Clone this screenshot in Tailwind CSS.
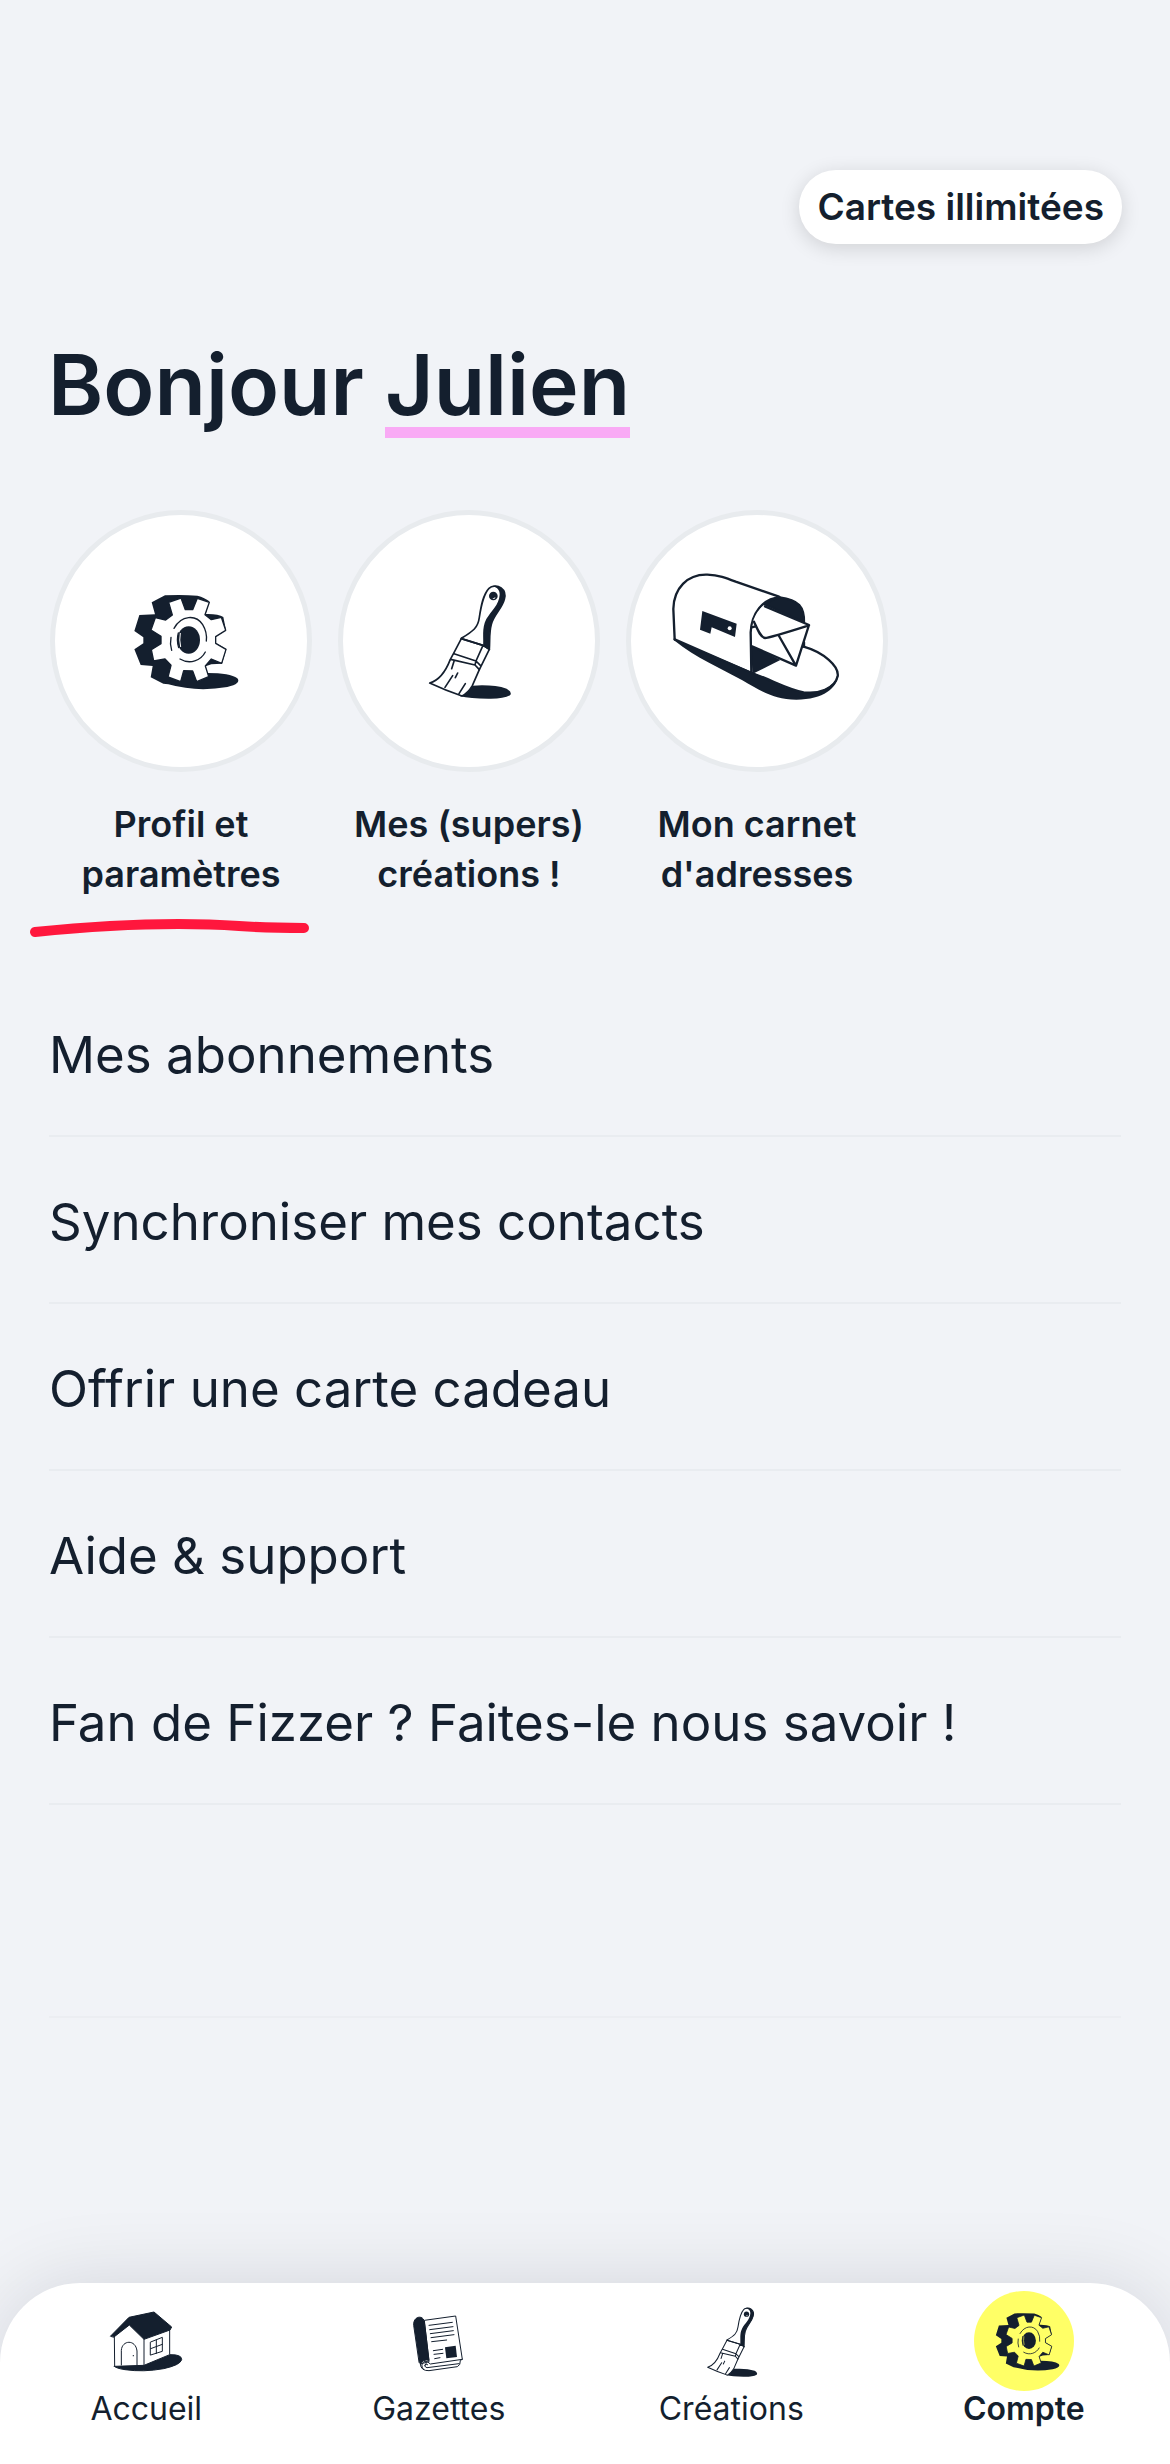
<!DOCTYPE html>
<html lang="fr">
<head>
<meta charset="utf-8">
<meta name="viewport" content="width=device-width, initial-scale=1">
<title>Compte</title>
<script src="https://cdn.jsdelivr.net/npm/@tailwindcss/browser@4"></script>
</head>
<body class="flex min-h-screen flex-col overflow-x-hidden bg-[#f1f3f7] font-['Inter',sans-serif] text-[#141f2e]">

<!-- Shared drawings: currentColor is the paper colour behind the ink -->
<svg class="hidden" aria-hidden="true">
  <symbol id="gear" overflow="visible">
    <path fill="#141f2e" d="M125 100L165 79Q215 76 262 80Q285 86 298 97L287 135Q325 134 340 144L348 183L318 203V222L349 240L336 284L304 286L287 292L292 312Q360 312 382 328Q395 344 352 354Q260 370 175 346L160 344L122 325L128 291L92 288L73 241L100 223V205L73 186L88 138L135 136Z"/>
    <path fill="currentColor" stroke="#141f2e" stroke-width="4" stroke-linejoin="round" d="M176 100L213 87L226 122H248L262 88L298 100L285 137L304 152L334 145L347 184L317 203V223L348 241L335 283L304 270L286 291L296 323L260 338L248 306L221 305L212 338L174 324L183 289L165 270L131 276L124 242L153 224V202L123 183L136 146L167 153L187 138Z"/>
    <ellipse cx="236" cy="213" rx="34" ry="41" fill="#141f2e"/>
    <g fill="none" stroke="#141f2e" stroke-width="4" stroke-linecap="round">
      <path d="M192 178C214 138 258 136 278 167Q292 190 289 216M210 270C240 288 273 274 286 249M183 205Q179 225 185 244M205 192Q199 213 206 236"/>
    </g>
    <path d="M211 192Q207 213 212 234" fill="none" stroke="currentColor" stroke-width="3"/>
  </symbol>
  <symbol id="brush" overflow="visible">
    <path fill="#141f2e" d="M150 382L188 350Q250 346 290 359Q308 370 300 379Q280 390 235 389Q180 389 150 382Z"/>
    <g stroke="#141f2e" stroke-width="5" stroke-linejoin="round" stroke-linecap="round">
      <path fill="#141f2e" d="M241 57C262 42 292 61 283 91C276 119 251 137 244 166C237 192 240 213 238 241L219 234L219 170L255 60Z"/>
      <path fill="currentColor" stroke="none" d="M154 208C190 186 204 176 208 145C213 112 219 77 237 57C250 46 270 58 269 77C267 108 243 126 229 150C214 179 222 206 219 234Z"/>
      <path fill="none" d="M154 208C190 186 204 176 208 145C213 112 219 77 237 58C247 49 262 50 269 60"/>
      <path fill="currentColor" d="M154 209L219 229L238 241L208 302L187 350Q174 372 156 381Q104 363 59 342Q98 331 121 271L132 251Z"/>
      <path fill="none" d="M154 209L219 229L198 276L132 254M122 271L195 288L208 302M198 276L195 288M198 276L211 289M219 229L238 241M133 274L125 299M128 320L105 355M143 312L136 326M166 344L147 374"/>
    </g>
    <circle cx="250" cy="81" r="13" fill="#141f2e"/>
    <path d="M247 89L253 90L257 84Z" fill="currentColor"/>
  </symbol>
</svg>

<main class="flex flex-1 flex-col px-12 pt-[170px]">
  <button type="button" class="self-end rounded-full bg-white px-[18px] py-3 text-[37px] leading-[50px] font-semibold shadow-[0_4px_20px_rgba(0,0,0,0.14)]">Cartes illimitées</button>

  <h1 class="mt-[87px] text-[84px] leading-[108px] font-semibold">Bonjour <span class="inline-block border-b-[11px] border-[#f9aaf5] leading-none">Julien</span></h1>

  <nav aria-label="Raccourcis" class="mt-[71px] ml-0.5 flex gap-[26px]">
    <a href="#profil" class="flex w-[262px] flex-col items-center text-center text-[36px] leading-[50px] font-semibold">
      <span class="flex size-[262px] rounded-full border-[5px] border-[#e8ebee] bg-white text-white">
        <svg class="size-full" viewBox="-165 -162 756 756" aria-hidden="true"><use href="#gear"/></svg>
      </span>
      <span class="mt-[27px]">Profil et<br>paramètres</span>
    </a>
    <a href="#creations" class="flex w-[262px] flex-col items-center text-center text-[36px] leading-[50px] font-semibold">
      <span class="flex size-[262px] rounded-full border-[5px] border-[#e8ebee] bg-white text-white">
        <svg class="size-full" viewBox="-201 -162 756 756" aria-hidden="true"><use href="#brush"/></svg>
      </span>
      <span class="mt-[27px]">Mes (supers)<br>créations !</span>
    </a>
    <a href="#carnet" class="flex w-[262px] flex-col items-center text-center text-[36px] leading-[50px] font-semibold">
      <span class="flex size-[262px] rounded-full border-[5px] border-[#e8ebee] bg-white">
        <svg class="size-full" viewBox="-84 -132 756 756" fill="none" stroke="#141f2e" stroke-width="7" stroke-linejoin="round" stroke-linecap="round" aria-hidden="true">
          <path fill="#141f2e" stroke="none" d="M45 240L278 338C335 364 390 398 448 401C492 402 530 376 538 348C535 386 494 422 412 422C340 422 300 392 250 364L150 311C112 292 80 271 45 244Z"/>
          <path d="M47 241L43 150C44 88 85 45 145 47C180 48 200 56 230 68L360 113"/>
          <path d="M434 263C494 280 541 322 536 352C527 390 478 406 434 400C384 391 335 361 278 342L47 241"/>
          <path fill="#141f2e" d="M318 137Q337 119 362 115C420 122 436 145 435 190Z"/>
          <path fill="#141f2e" stroke="none" d="M277 259L364 303L280 345Z"/>
          <path d="M277 340L275 220C278 165 310 118 362 115"/>
          <path fill="#fff" stroke="none" d="M282 186Q295 152 316 139L450 198L411 320L279 262Z"/>
          <path d="M318 142L450 198L411 320L279 262M285 188C296 212 304 235 318 237Q330 237 450 199M360 231L409 317M435 250V263M278 205L287 203"/>
          <path fill="#141f2e" stroke="none" d="M130 156L233 194L228 234L158 205L154 224L123 212Z"/>
          <circle cx="212" cy="208" r="6" fill="#fff" stroke="none"/>
        </svg>
      </span>
      <span class="mt-[27px]">Mon carnet<br>d'adresses</span>
    </a>
  </nav>
  <svg class="mt-4 -ml-5 h-6 w-[284px]" viewBox="0 0 284 24" fill="none" stroke="#ff173d" stroke-width="10" stroke-linecap="round" aria-hidden="true"><path d="M7 17Q125 5 211 11Q240 13 276 13"/></svg>

  <ul class="mx-px mt-[31px] text-[51px] leading-[60px]">
    <li class="border-b-2 border-[#e9ecf0]"><a href="#abonnements" class="block pt-[55px] pb-[50px]">Mes abonnements</a></li>
    <li class="border-b-2 border-[#e9ecf0]"><a href="#contacts" class="block pt-[55px] pb-[50px]">Synchroniser mes contacts</a></li>
    <li class="border-b-2 border-[#e9ecf0]"><a href="#cadeau" class="block pt-[55px] pb-[50px]">Offrir une carte cadeau</a></li>
    <li class="border-b-2 border-[#e9ecf0]"><a href="#aide" class="block pt-[55px] pb-[50px]">Aide &amp; support</a></li>
    <li class="border-b-2 border-[#e9ecf0]"><a href="#avis" class="block pt-[55px] pb-[50px]">Fan de Fizzer ? Faites-le nous savoir !</a></li>
  </ul>
  <hr class="mx-px mt-[211px] border-t-2 border-[#eceef2]">
</main>

<nav aria-label="Navigation principale" class="grid grid-cols-4 rounded-t-[80px] bg-white pt-2 pb-[37px] text-center text-[32px] leading-9 shadow-[0_0_80px_rgba(20,20,30,0.12)]">
  <a href="#accueil" class="flex flex-col items-center">
    <svg class="size-[100px]" viewBox="18 3 300 300" fill="none" stroke="#141f2e" stroke-width="3" stroke-linejoin="round" stroke-linecap="round" aria-hidden="true">
      <path fill="#141f2e" d="M73 229L162 226L239 194Q276 193 275 209Q271 225 221 236Q160 247 105 239Q78 235 73 229Z"/>
      <path fill="#fff" d="M73 137L74 229L162 226L239 194V119L190 95L118 104Z"/>
      <path fill="#141f2e" d="M62 138L117 82L192 66L245 111L240 120L162 148L118 105L72 141Z"/>
      <path d="M162 148V226M94 225V181C96 150 137 147 141 183V225M182 156L217 142V184L182 195ZM199 150V190M182 176L217 163"/>
      <circle cx="130" cy="197" r="2" fill="#141f2e" stroke="none"/>
    </svg>
    Accueil
  </a>
  <a href="#gazettes" class="flex flex-col items-center">
    <svg class="size-[100px]" viewBox="-3 3 300 300" fill="none" stroke="#141f2e" stroke-width="3" stroke-linejoin="round" stroke-linecap="round" aria-hidden="true">
      <path fill="#fff" d="M91 223Q93 243 117 242L202 230Q212 226 211 211L217 208L197 78L103 91L117 214Z"/>
      <path fill="#141f2e" d="M71 105C69 77 101 74 103 96L117 211Q99 207 92 222L88 218Z"/>
      <path d="M217 208L121 222Q112 211 102 215Q90 224 100 238M108 221Q100 230 111 233L207 221M104 226Q106 218 113 224"/>
      <path d="M117 106L187 97M119 119L189 110M121 131L190 122M123 143L192 134M125 155L170 150M130 182L158 178M132 193L159 190M134 206L150 203"/>
      <path fill="#141f2e" stroke="none" d="M165 172L197 167L201 201L169 205Z"/>
    </svg>
    Gazettes
  </a>
  <a href="#creations" class="flex flex-col items-center">
    <svg class="size-[100px] text-white" viewBox="-27 3 300 300" aria-hidden="true"><g transform="translate(17 23) scale(.61)"><use href="#brush"/></g></svg>
    Créations
  </a>
  <a href="#compte" aria-current="page" class="flex flex-col items-center font-semibold">
    <svg class="size-[100px] rounded-full bg-[#ffff66] text-[#ffff66]" viewBox="69 63 300 300" aria-hidden="true"><g transform="translate(90 82) scale(.61)"><use href="#gear"/></g></svg>
    Compte
  </a>
</nav>
</body>
</html>
